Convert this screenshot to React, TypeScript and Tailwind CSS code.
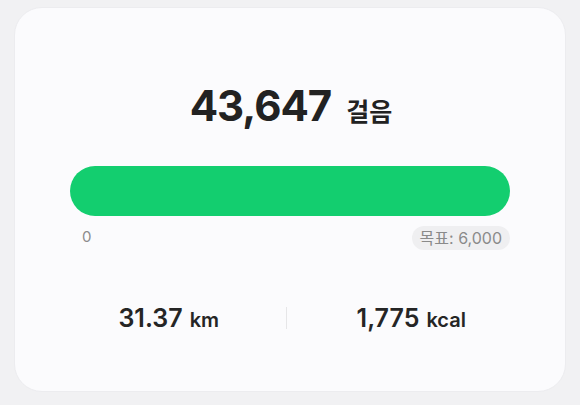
import React from "react";

const font = { fontFamily: 'Inter, "Noto Sans CJK KR", sans-serif' };

export default function App() {
  return (
    <div className="w-[580px] h-[405px] bg-[#f1f1f3] pt-[7px] px-[14px]" style={font}>
      <div className="h-[385px] rounded-[28px] bg-[#fbfbfd] border border-[#ececef] flex flex-col items-center pt-[74px]">
        <div className="flex items-baseline gap-[15px] text-[#222222] pl-[2px]">
          <span className="text-[42px] font-bold leading-[48px] tracking-[-1px]">43,647</span>
          <span className="text-[25px] font-semibold">걸음</span>
        </div>
        <div className="w-[440px] mt-[34px]">
          <div className="h-[50px] rounded-full bg-[#13ce6f]" />
          <div className="flex justify-between items-center mt-[10px]">
            <span className="pl-[12px] text-[15px] text-[#8c8c8c]">0</span>
            <span className="h-[24px] px-[8px] rounded-full bg-[#efeff1] text-[16px] text-[#8a8a8a] flex items-center">목표: 6,000</span>
          </div>
        </div>
        <div className="w-[476px] flex items-center mt-[50px] text-[#252525]">
          <div className="flex-1 flex justify-center items-baseline gap-[7px]">
            <span className="text-[25px] font-semibold">31.37</span>
            <span className="text-[20px] font-semibold">km</span>
          </div>
          <div className="w-px h-[22px] bg-[#e6e6e8]" />
          <div className="flex-1 flex justify-center items-baseline gap-[7px] pl-[8px]">
            <span className="text-[25px] font-semibold">1,775</span>
            <span className="text-[20px] font-semibold">kcal</span>
          </div>
        </div>
      </div>
    </div>
  );
}
